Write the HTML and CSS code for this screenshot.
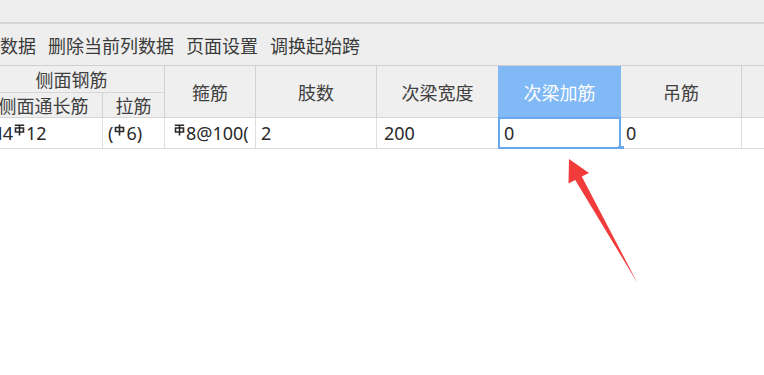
FILE: index.html
```html
<!DOCTYPE html>
<html lang="zh">
<head>
<meta charset="utf-8">
<link rel="stylesheet" href="styles.css">
</head>
<body>
<div class="topband"></div>
<div class="toolbar">
  <span class="tool">数据</span>
  <span class="tool">删除当前列数据</span>
  <span class="tool">页面设置</span>
  <span class="tool">调换起始跨</span>
</div>
<div class="gridwrap">
  <div class="grid">
    <div class="hd group">侧面钢筋</div>
    <div class="hd tall c3">箍筋</div>
    <div class="hd tall c4">肢数</div>
    <div class="hd tall c5">次梁宽度</div>
    <div class="hd tall c6 sel-hd">次梁加筋</div>
    <div class="hd tall c7">吊筋</div>
    <div class="hd tall c8"></div>
    <div class="hd sub">侧面通长筋</div>
    <div class="hd sub">拉筋</div>

    <div class="cell first">N4<svg class="sym" viewBox="0 0 11 12"><path d="M0.8 1.2H10.2M1.5 4H9.5V8H1.5ZM5.5 1.2V11.5" /></svg>12</div>
    <div class="cell">(<svg class="sym" viewBox="0 0 11 12"><path d="M1.5 3.5H9.5V7.5H1.5ZM5.5 0.5V11.5" /></svg>6)</div>
    <div class="cell stir"><svg class="sym" viewBox="0 0 11 12"><path d="M0.8 1.2H10.2M1.5 4H9.5V8H1.5ZM5.5 1.2V11.5" /></svg>8@100(</div>
    <div class="cell">2</div>
    <div class="cell wide">200</div>
    <div class="cell sel">0<span class="handle"></span></div>
    <div class="cell">0</div>
    <div class="cell"></div>
  </div>
</div>
<svg class="arrow" width="764" height="375" viewBox="0 0 764 375">
  <polygon points="569,159 589,173 581.8,176.6 637.5,283 575.2,180 568.5,183.5" fill="#f23c3c"/>
</svg>
</body>
</html>
```

FILE: styles.css
```css
html, body {
  margin: 0;
  padding: 0;
  background: #ffffff;
}
body {
  width: 764px;
  height: 375px;
  overflow: hidden;
  position: relative;
  font-family: "Noto Sans", "Noto Sans CJK SC", sans-serif;
  font-size: 18px;
  color: #333333;
}
.topband {
  height: 22px;
  background: #eeeeee;
  border-bottom: 2px solid #d4d4d4;
}
.toolbar {
  height: 41px;
  background: #eeeeee;
  display: flex;
  align-items: center;
  gap: 12px;
  padding-left: 0;
  color: #3a3a3a;
  white-space: nowrap;
}
.gridwrap {
  overflow: hidden;
  border-top: 1px solid #d0d0d0;
}
.grid {
  margin-left: -15px;
  display: grid;
  grid-template-columns: 118px 62px 91px 121px 122px 122px 121px 60px;
  grid-template-rows: 27px 25px 31px;
  width: 817px;
}
.hd {
  background: #efefef;
  border-right: 1px solid #d2d2d2;
  border-bottom: 1px solid #d6d6d6;
  box-sizing: border-box;
  display: flex;
  align-items: center;
  justify-content: center;
  color: #404040;
  white-space: nowrap;
}
.group {
  grid-column: 1 / 3;
  grid-row: 1;
  padding-right: 6px;
}
.tall { grid-row: 1 / 3; }
.c3 { grid-column: 3; }
.c4 { grid-column: 4; }
.c5 { grid-column: 5; }
.c6 { grid-column: 6; }
.c7 { grid-column: 7; }
.c8 { grid-column: 8; }
.sub { grid-row: 2; }
.sel-hd {
  background: #80b9f6;
  color: #ffffff;
  border-right-color: #80b9f6;
  border-bottom-color: #80b9f6;
  position: relative;
}
.sel-hd::before {
  content: "";
  position: absolute;
  left: -1px;
  top: -1px;
  bottom: 0;
  width: 1px;
  background: #80b9f6;
}
.cell {
  background: #ffffff;
  border-right: 1px solid #dedede;
  border-bottom: 1px solid #dadada;
  box-sizing: border-box;
  display: flex;
  align-items: center;
  padding-left: 5px;
  white-space: nowrap;
  overflow: hidden;
  color: #2a2a2a;
}
.cell.first { padding-left: 4px; }
.cell.stir { padding-left: 8px; }
.cell.wide { padding-left: 7px; }
.sym {
  width: 11px;
  height: 12px;
  margin: 0 1px 6px 1px;
  fill: none;
  stroke: #2a2a2a;
  stroke-width: 1.6;
  flex: none;
}
.sel {
  position: relative;
  overflow: visible;
  padding-left: 5px;
}
.sel::after {
  content: "";
  position: absolute;
  left: -1px;
  top: -1px;
  right: -1px;
  bottom: -1px;
  border: 2px solid #6aa8ee;
}
.handle {
  position: absolute;
  right: -4px;
  bottom: -4px;
  width: 6px;
  height: 6px;
  background: #6aa8ee;
  z-index: 2;
}
.arrow {
  position: absolute;
  left: 0;
  top: 0;
  pointer-events: none;
}
```
